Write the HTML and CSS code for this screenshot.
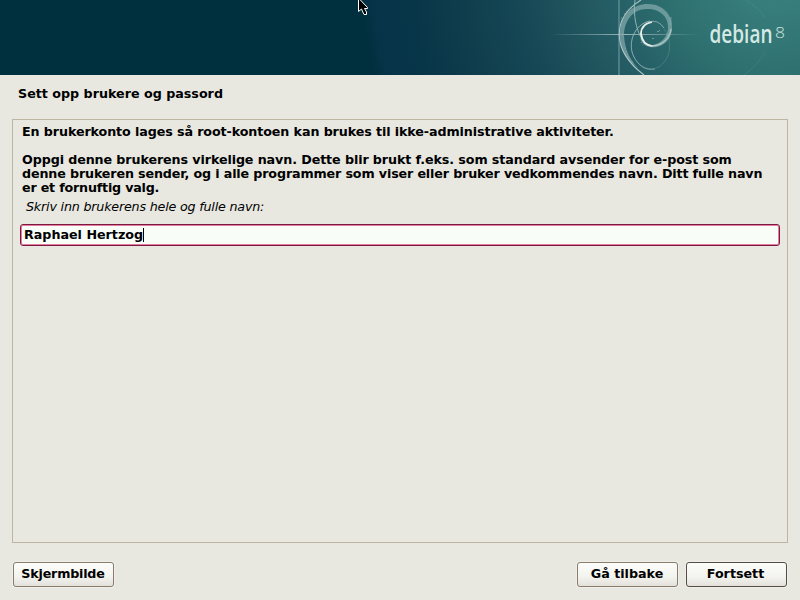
FILE: index.html
```
<!DOCTYPE html>
<html lang="nb">
<head>
<meta charset="utf-8">
<title>Sett opp brukere og passord</title>
<link rel="stylesheet" href="styles.css">
</head>
<body>
<header class="banner">
<svg class="art" width="270" height="75" viewBox="530 0 270 75" fill="none">
<defs>
<linearGradient id="beam" gradientUnits="userSpaceOnUse" x1="550" y1="0" x2="700" y2="0"><stop stop-color="#b7cdce" stop-opacity="0"/><stop offset=".5" stop-color="#b7cdce" stop-opacity=".8"/><stop offset="1" stop-color="#b7cdce" stop-opacity="0"/></linearGradient>
<linearGradient id="ring" gradientUnits="userSpaceOnUse" x1="638" y1="25" x2="674" y2="42"><stop stop-color="#e5eeeb"/><stop offset="1" stop-color="#90b3b1"/></linearGradient>
</defs>
<path d="M745 0Q760 8 765 18M765 52Q757 66 744 75" stroke="#6c9f95" stroke-width=".7" opacity=".35"/>
<path d="M619 0V75" stroke="#80a7aa" stroke-width="2" opacity=".45"/>
<rect x="550" y="34" width="150" height="1" fill="url(#beam)"/>
<path d="M620 35C620 14 633 4 648 4C663 4 673 15 672 29C671 42 660 49 650 47C644 46 641 42 640 37C643 43 647 45 652 45C661 44 667 37 668 29C669 16 659 9 648 9C634 8 624 20 624 36C625 50 630 60 638 68C626 60 620 49 620 35Z" fill="#81a8aa" opacity=".75"/>
<path d="M641 0C612 18 611 50 644 75" stroke="#a9c2c3" stroke-width="1.1"/>
<path d="M635 0C633 15 636 30 643 41" stroke="#8fb5b6"/>
<path d="M650 21C634 24 627 44 634 57C641 70 656 73 664 62C672 53 671 38 664 29" stroke="#93b4b5" stroke-width=".9" opacity=".3"/>
<path d="M650 21C634 24 627 44 634 57C638 65 645 71 655 69" stroke="#9dbbbc" opacity=".7"/>
<path d="M641 33C642 42 647 46 653 46C663 45 670 38 671 29" stroke="url(#ring)" stroke-width="1.7"/>
<path d="M652 22Q641 24 641 34Q642 44 652 46" stroke="#e8efeb" stroke-width="1.7"/>
<path d="M649 22Q658 19 664 28" stroke="#a7c3c1" opacity=".7"/>
<path d="M621 18h1M624 14l5-5 7-3M625 48l3 8 5 7M641 42l2 3" stroke="#87aaad" stroke-width="1.4" stroke-dasharray="1 2" opacity=".6"/>
<path d="M670.500 17v8" stroke="#81a8aa" stroke-width="2" opacity=".6"/>
<path d="M652 38.500h2M657 31.500h2M659 30.500h1" stroke="#9dbbb8" opacity=".6"/>
<text class="brand" x="709.500" y="43" textLength="63" lengthAdjust="spacingAndGlyphs">debian</text>
<text class="release" x="775" y="38" textLength="10" lengthAdjust="spacingAndGlyphs">8</text>
</svg>
<svg class="pointer" width="11" height="16" viewBox="0 0 11 16"><path d="M.5-2V11.500L3.500 9L6 14.500H8.500V12L6.500 8.500H9.500V7.500Z" fill="#000" stroke="#fff"/></svg>
</header>
<main>
<h1>Sett opp brukere og passord</h1>
<section class="panel">
<p class="intro">En brukerkonto lages så root-kontoen kan brukes til ikke-administrative aktiviteter.</p>
<p class="info">Oppgi denne brukerens virkelige navn. Dette blir brukt f.eks. som standard avsender for e-post som<br><span class="tight">denne brukeren sender, og i alle programmer som viser eller bruker vedkommendes navn. Ditt fulle navn</span><br><span class="tighter">er et fornuftig valg.</span></p>
<p class="label">Skriv inn brukerens hele og fulle navn:</p>
<div class="field"><span>Raphael Hertzog</span><i class="caret"></i></div>
</section>
<footer>
<button class="shot">Skjermbilde</button>
<button class="back">Gå tilbake</button>
<button class="next">Fortsett</button>
</footer>
</main>
</body>
</html>
```
FILE: styles.css
```
* { box-sizing: border-box; }
body {
  margin: 0;
  width: 800px;
  height: 600px;
  overflow: hidden;
  background: #e8e8e0;
  color: #000;
  font: bold 12.7px/14px "DejaVu Sans", sans-serif;
}
.banner {
  position: relative;
  height: 75px;
  display: flex;
  justify-content: flex-end;
  background: radial-gradient(circle at 775px -35px, #39847f 0, #367c7b 50px, #2e706f 110px, #265f67 165px, #20545d 210px, #174957 250px, #103e4d 310px, #083649 365px, #063347 405px, #002f3e 415px);
}
.art { display: block; }
.pointer { position: absolute; left: 358px; top: 0; }
.brand { font: 600 25.5px "Open Sans", sans-serif; fill: #d5e9e4; }
.release { font: 300 15px "Open Sans", sans-serif; fill: #cfe4df; }
main { height: 525px; padding: 12px 12px 0; }
h1 { margin: 0 0 18px 6px; font-size: 12.7px; line-height: 14px; }
.panel { height: 424px; border: 1px solid #bdb5a2; padding: 5px 7px; }
p { margin: 0 2px; white-space: nowrap; letter-spacing: -.1px; }
.info { margin-top: 14px; }
.tight { letter-spacing: -.14px; }
.tighter { letter-spacing: -.2px; }
.label { margin: 5px 0 0 6px; font-weight: normal; font-style: italic; letter-spacing: -.19px; }
.field {
  display: flex;
  align-items: center;
  height: 22px;
  margin-top: 10px;
  padding: 0 3px;
  background: #f8fdf8;
  border: 1px solid #7b1941;
  border-radius: 3px;
  box-shadow: inset 0 0 0 1px #e77b9f;
}
.caret { width: 1px; height: 14px; background: #000; }
footer { display: flex; padding: 19px 1px 0; }
button {
  width: 101px;
  height: 25px;
  padding: 0 1px 1px 0;
  border: 1px solid #897c6c;
  border-radius: 3px;
  background: linear-gradient(#fcfcfa, #f3f3ef 60%, #e3e1da);
  box-shadow: 0 0 0 1px #efeee8;
  color: #000;
  font: inherit;
}
.shot { letter-spacing: -.2px; }
.back { margin-left: auto; }
.next { margin-left: 8px; padding-right: 2px; border-color: #554c48; }
```
